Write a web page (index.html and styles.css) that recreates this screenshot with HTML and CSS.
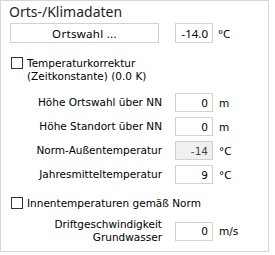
FILE: index.html
```html
<!DOCTYPE html>
<html lang="de">
  <head>
    <meta charset="UTF-8" />
    <title>Orts-/Klimadaten</title>
    <link rel="stylesheet" href="styles.css">
  </head>
  <body>
    <div class="panel">
      <div class="panel__title">Orts-/Klimadaten</div>
      <div class="place">
        <button class="place__btn">Ortswahl ...</button>
        <input class="field place__temp" value="-14.0" />
        <span class="unit place__unit">°C</span>
      </div>
      <label class="check">
        <span class="check__box"></span>
        <span>Temperaturkorrektur<br />(Zeitkonstante) (0.0 K)</span>
      </label>
      <div class="rows">
        <span class="rows__label">Höhe Ortswahl über NN</span>
        <input class="field" value="0" />
        <span class="unit">m</span>

        <span class="rows__label">Höhe Standort über NN</span>
        <input class="field" value="0" />
        <span class="unit">m</span>

        <span class="rows__label">Norm-Außentemperatur</span>
        <input class="field field--off" value="-14" disabled />
        <span class="unit">°C</span>

        <span class="rows__label">Jahresmitteltemperatur</span>
        <input class="field" value="9" />
        <span class="unit">°C</span>
      </div>
      <label class="check check--norm">
        <span class="check__box"></span>
        <span>Innentemperaturen gemäß Norm</span>
      </label>
      <div class="rows rows--drift">
        <span class="rows__label">Driftgeschwindigkeit<br />Grundwasser</span>
        <input class="field" value="0" />
        <span class="unit">m/s</span>
      </div>
    </div>
  </body>
</html>
```

FILE: styles.css
```css
* {
  box-sizing: border-box;
}
body {
  margin: 0;
  background: #fff;
  font-family: "DejaVu Sans", Verdana, sans-serif;
  font-size: 10.5px;
  color: #000;
}
.panel {
  width: 269px;
  height: 252px;
  border: 1px solid #d6d6d6;
  padding: 2px 0 0 8px;
}
.panel__title {
  font-family: "Noto Sans", "Open Sans", sans-serif;
  font-size: 14px;
  color: #1e1e1e;
  line-height: 18px;
}
.place {
  display: flex;
  align-items: center;
  margin-top: 2px;
  font-family: "Noto Sans", "Open Sans", sans-serif;
  font-size: 11.5px;
}
.place__btn {
  width: 149px;
  height: 20px;
  margin-left: 1px;
  margin-right: 16px;
  border: 1px solid #d2d2d2;
  background: #fff;
  font: inherit;
  letter-spacing: 0.3px;
  color: #000;
  padding: 0;
}
.field {
  width: 38px;
  height: 19px;
  border: 1px solid #d2d2d2;
  background: #fff;
  font: inherit;
  color: #000;
  text-align: right;
  padding: 0 4px 0 0;
}
.place__temp {
  height: 20px;
}
.field--off {
  background: #f0f0f0;
  color: #444;
}
.unit {
  margin-left: 5px;
}
.check {
  display: flex;
  align-items: flex-start;
  gap: 4px;
  margin-top: 14px;
  margin-left: 2px;
  line-height: 13px;
}
.check__box {
  width: 12px;
  height: 12px;
  border: 1px solid #333;
  flex: none;
}
.rows {
  display: grid;
  grid-template-columns: 153px 38px auto;
  column-gap: 13px;
  row-gap: 5px;
  align-items: center;
  margin-top: 10px;
}
.rows .unit {
  margin-left: -7px;
}
.rows__label {
  text-align: right;
  line-height: 13px;
}
.check--norm {
  margin-top: 13px;
}
.rows--drift {
  margin-top: 8px;
}
```
